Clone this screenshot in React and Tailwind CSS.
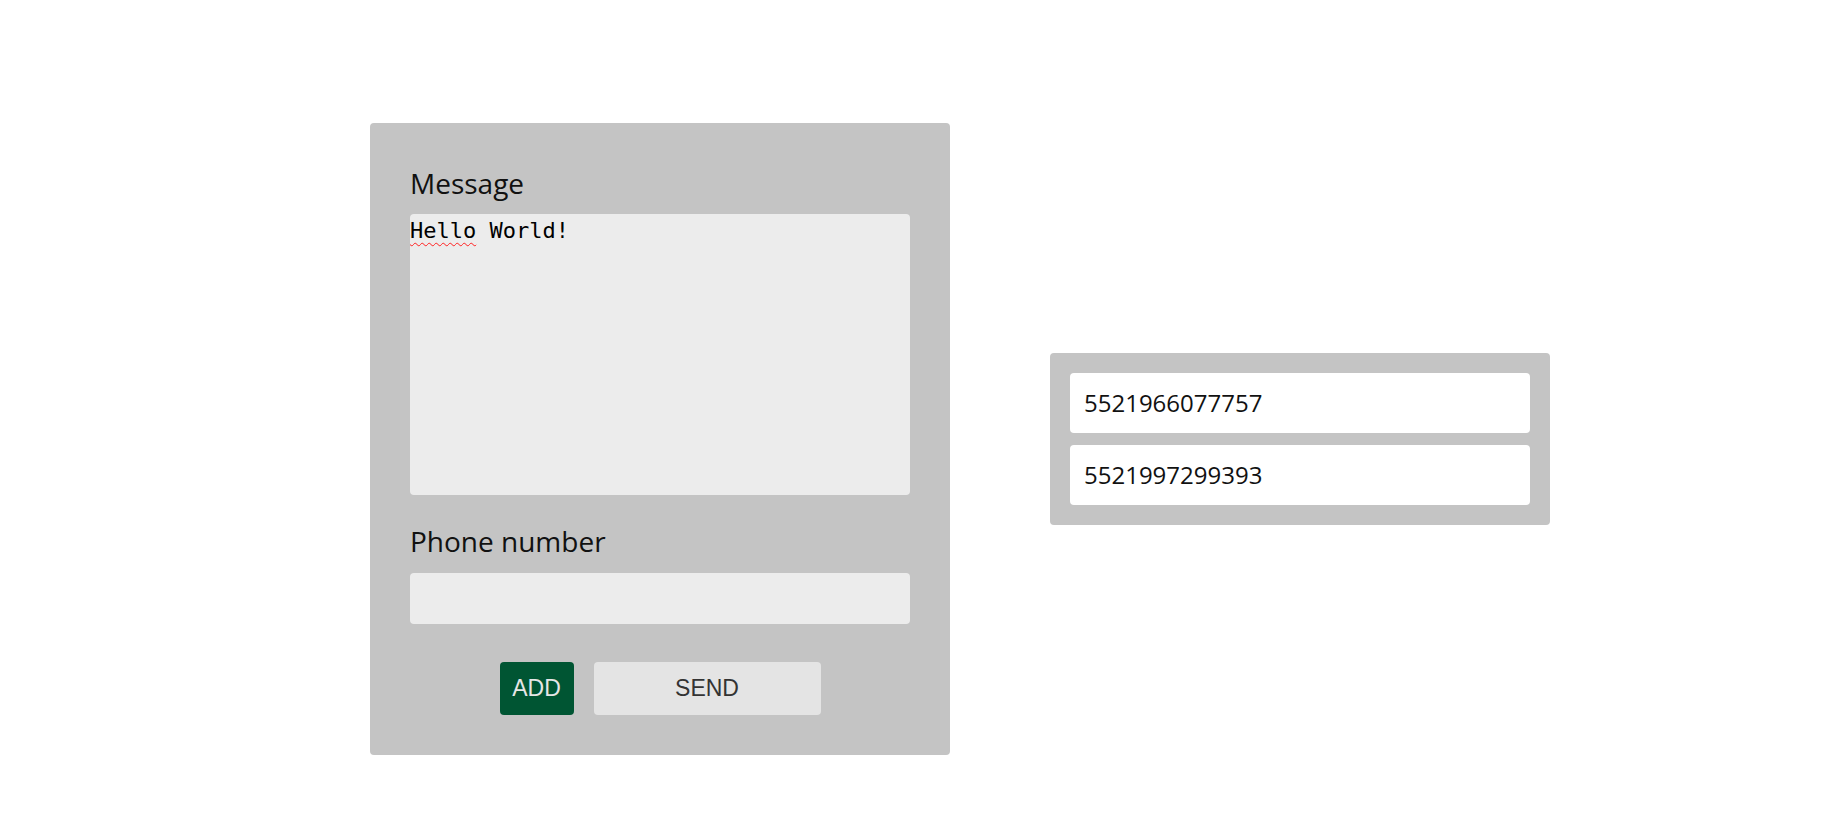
export default function App() {
  const sans = { fontFamily: '"Open Sans", "Noto Sans", sans-serif' };
  return (
    <div className="w-full h-[817px] bg-white flex items-center gap-[100px] pl-[370px] pt-[61px]">
      <div className="w-[580px] h-[632px] bg-[#c4c4c4] rounded-[4px] px-[40px] pt-[42px] flex flex-col" style={sans}>
        <div className="text-[28px] leading-[36px] text-[#111] mb-[13px]">Message</div>
        <div className="h-[281px] bg-[#ececec] rounded-[4px] pt-[3px] text-[22px] leading-[28px] text-black" style={{ fontFamily: '"DejaVu Sans Mono", "Liberation Mono", monospace' }}>
          <span className="underline decoration-wavy decoration-[#ff2020] decoration-1 underline-offset-[4px]">Hello</span> World!
        </div>
        <div className="text-[28px] leading-[36px] text-[#111] mt-[28px] mb-[14px]">Phone number</div>
        <div className="h-[51px] bg-[#ececec] rounded-[4px]"></div>
        <div className="flex justify-center gap-[20px] mt-[38px]" style={{ fontFamily: '"Liberation Sans", Arial, sans-serif' }}>
          <div className="h-[53px] w-[74px] bg-[#005533] rounded-[4px] flex items-center justify-center text-[23px] text-[#e6e6e6]">ADD</div>
          <div className="h-[53px] w-[227px] bg-[#e4e4e4] rounded-[4px] flex items-center justify-center text-[23px] text-[#333]">SEND</div>
        </div>
      </div>
      <div className="w-[500px] bg-[#c4c4c4] rounded-[4px] p-[20px] flex flex-col gap-[12px]" style={sans}>
        <div className="h-[60px] bg-white rounded-[4px] pl-[14px] flex items-center text-[24px] text-[#111]">5521966077757</div>
        <div className="h-[60px] bg-white rounded-[4px] pl-[14px] flex items-center text-[24px] text-[#111]">5521997299393</div>
      </div>
    </div>
  );
}
